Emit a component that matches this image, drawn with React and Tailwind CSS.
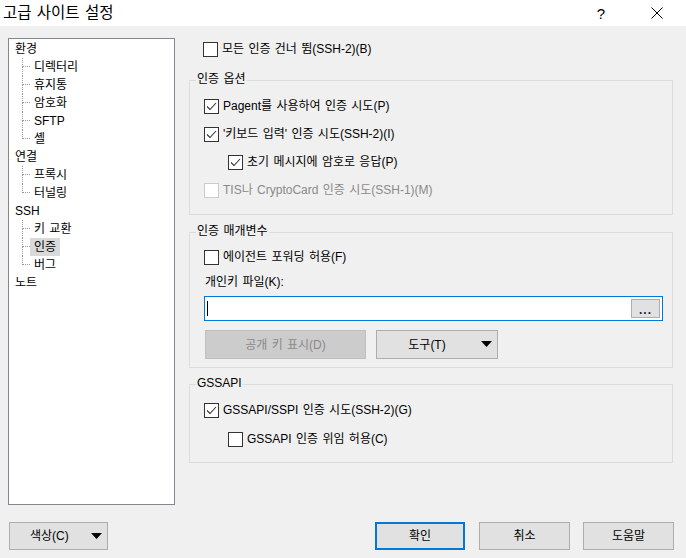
import React from "react";

const FONT = { fontFamily: '"Liberation Sans", "Noto Sans CJK KR", sans-serif', wordSpacing: "1px" };

function Check({ checked, disabled }) {
  return (
    <span
      className={
        "flex h-[15px] w-[15px] shrink-0 items-center justify-center border " +
        (disabled ? "border-[#cccccc] bg-white" : "border-[#333333] bg-white")
      }
    >
      {checked && (
        <svg width="13" height="13" viewBox="0 0 13 13">
          <polyline points="2,6.5 5,9.5 11,3" fill="none" stroke="#333333" strokeWidth="1.1" />
        </svg>
      )}
    </span>
  );
}

function CheckRow({ checked, disabled, label, indent, className }) {
  return (
    <div className={"flex h-[20px] items-center gap-[4px] " + (indent ? "ml-[38px] " : "ml-[14px] ") + (className || "")}>
      <Check checked={checked} disabled={disabled} />
      <span className={disabled ? "text-[#8a8a8a]" : "text-black"}>{label}</span>
    </div>
  );
}

function Group({ title, className, children }) {
  return (
    <div className={"relative border border-[#dcdcdc] " + (className || "")}>
      <span className="absolute left-[6px] -top-[10px] bg-[#f0f0f0] px-[1px] leading-[16px] text-black">{title}</span>
      {children}
    </div>
  );
}

function TreeChild({ label, last, selected }) {
  return (
    <div className="flex h-[18px] items-stretch">
      <div className="ml-[13px] flex w-[8px] flex-col">
        <div className="h-[9px] border-l border-b border-dotted border-[#9a9a9a]" />
        {!last && <div className="flex-1 border-l border-dotted border-[#9a9a9a]" />}
      </div>
      <div className={"flex items-center px-[4px] " + (selected ? "bg-[#d9d9d9]" : "")}>{label}</div>
    </div>
  );
}

function TreeRoot({ label }) {
  return <div className="flex h-[18px] items-center pl-[6px]">{label}</div>;
}

function Tree() {
  const groups = [
    { root: "환경", kids: ["디렉터리", "휴지통", "암호화", "SFTP", "셸"] },
    { root: "연결", kids: ["프록시", "터널링"] },
    { root: "SSH", kids: ["키 교환", "인증", "버그"] },
    { root: "노트", kids: [] },
  ];
  return (
    <div className="ml-[8px] mt-[12px] h-[467px] w-[167px] border border-[#828790] bg-white pt-[1px] text-black">
      {groups.map((g) => (
        <div key={g.root}>
          <TreeRoot label={g.root} />
          {g.kids.map((k, i) => (
            <TreeChild key={k} label={k} last={i === g.kids.length - 1} selected={k === "인증"} />
          ))}
        </div>
      ))}
    </div>
  );
}

function Triangle() {
  return (
    <svg width="11" height="6" viewBox="0 0 11 6">
      <polygon points="0,0 11,0 5.5,6" fill="#000" />
    </svg>
  );
}

export default function App() {
  return (
    <div className="flex h-[558px] w-[686px] flex-col overflow-hidden bg-[#f0f0f0] text-[12px]" style={FONT}>
      {/* Title bar */}
      <div className="flex h-[26px] items-center bg-white">
        <span className="ml-[3px] text-[15.5px] leading-none text-black">고급 사이트 설정</span>
        <span className="ml-auto mr-[46px] text-[15px] leading-none text-black">?</span>
        <svg className="mr-[23px]" width="12" height="12" viewBox="0 0 12 12">
          <path d="M0.5 0.5 L11.5 11.5 M11.5 0.5 L0.5 11.5" stroke="#000" strokeWidth="1" />
        </svg>
      </div>

      {/* Body */}
      <div className="flex h-[496px]">
        <Tree />
        <div className="ml-[14px] flex w-[484px] flex-col">
          <CheckRow label="모든 인증 건너 뜀(SSH-2)(B)" className="mt-[13px]" />

          <Group title="인증 옵션" className="mt-[21px] h-[135px] pt-[15px]">
            <CheckRow checked label="Pagent를 사용하여 인증 시도(P)" />
            <CheckRow checked label="'키보드 입력' 인증 시도(SSH-2)(I)" className="mt-[8px]" />
            <CheckRow checked indent label="초기 메시지에 암호로 응답(P)" className="mt-[8px]" />
            <CheckRow disabled label="TIS나 CryptoCard 인증 시도(SSH-1)(M)" className="mt-[8px]" />
          </Group>

          <Group title="인증 매개변수" className="mt-[17px] h-[136px] pt-[14px]">
            <CheckRow label="에이전트 포워딩 허용(F)" />
            <div className="ml-[15px] mt-[7px] h-[16px] leading-[16px]">개인키 파일(K):</div>
            <div className="ml-[14px] mr-[9px] mt-[6px] flex h-[25px] items-center border border-[#0078d7] bg-white">
              <span className="ml-[2px] h-[15px] w-[1px] bg-black" />
              <div className="ml-auto mr-[2px] flex h-[19px] w-[29px] items-end justify-center border border-[#adadad] bg-[#e1e1e1] pb-[3px]">
                <span className="text-[12px] font-bold leading-[8px] tracking-[1px] text-[#1a1a40]">...</span>
              </div>
            </div>
            <div className="ml-[15px] mt-[9px] flex gap-[10px]">
              <div className="flex h-[29px] w-[161px] items-center justify-center border border-[#bfbfbf] bg-[#cccccc] text-[#8a8a8a]">
                공개 키 표시(D)
              </div>
              <div className="relative flex h-[29px] w-[122px] items-center justify-center border border-[#adadad] bg-[#e1e1e1] text-black">
                <span className="mr-[20px]">도구(T)</span>
                <span className="absolute right-[5px] top-[10px] flex w-[11px]"><Triangle /></span>
              </div>
            </div>
          </Group>

          <Group title="GSSAPI" className="mt-[16px] h-[79px] pt-[15px]">
            <CheckRow checked label="GSSAPI/SSPI 인증 시도(SSH-2)(G)" />
            <CheckRow indent label="GSSAPI 인증 위임 허용(C)" className="mt-[9px]" />
          </Group>
        </div>
      </div>

      {/* Bottom buttons */}
      <div className="flex h-[28px] items-stretch">
        <div className="relative ml-[9px] flex w-[99px] items-center border border-[#adadad] bg-[#e1e1e1] text-black">
          <span className="ml-[20px]">색상(C)</span>
          <span className="absolute right-[5px] top-[10px] flex w-[11px]"><Triangle /></span>
        </div>
        <div className="ml-auto flex w-[90px] items-center justify-center border-2 border-[#0078d7] bg-[#e1e1e1]">확인</div>
        <div className="ml-[14px] flex w-[91px] items-center justify-center border border-[#adadad] bg-[#e1e1e1]">취소</div>
        <div className="ml-[13px] mr-[12px] flex w-[91px] items-center justify-center border border-[#adadad] bg-[#e1e1e1]">도움말</div>
      </div>
    </div>
  );
}
